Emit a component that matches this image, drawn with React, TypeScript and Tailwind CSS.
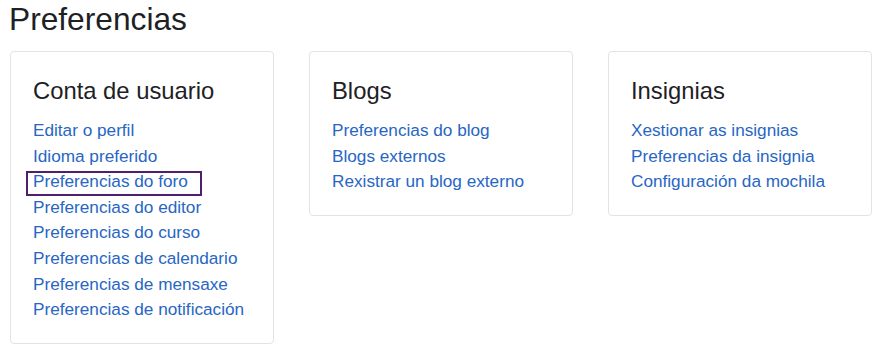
import React from 'react';

interface Section {
  title: string;
  links: string[];
}

const sections: Section[] = [
  {
    title: 'Conta de usuario',
    links: [
      'Editar o perfil',
      'Idioma preferido',
      'Preferencias do foro',
      'Preferencias do editor',
      'Preferencias do curso',
      'Preferencias de calendario',
      'Preferencias de mensaxe',
      'Preferencias de notificación',
    ],
  },
  {
    title: 'Blogs',
    links: ['Preferencias do blog', 'Blogs externos', 'Rexistrar un blog externo'],
  },
  {
    title: 'Insignias',
    links: ['Xestionar as insignias', 'Preferencias da insignia', 'Configuración da mochila'],
  },
];

// the focused link gets a ring drawn over it
const FOCUSED = 'Preferencias do foro';

const PrefCard: React.FC<{ section: Section }> = ({ section }) => (
  <div className="w-[264px] rounded-[4px] border border-[#e3e3e3] bg-white px-[22px] pt-[25px] pb-[20px]">
    <h3 className="text-[23.8px] leading-[28px] text-[#1d2125] font-normal">{section.title}</h3>
    <ul className="mt-[13px]">
      {section.links.map((link) => (
        <li key={link} className="relative h-[25.6px] leading-[25.6px]">
          <a href="#" className="text-[17.2px] text-[#2766c4]">
            {link}
          </a>
          {link === FOCUSED && (
            <span className="pointer-events-none absolute -left-[5px] top-[4px] h-[21px] w-[172px] outline-2 outline-[#4e1f6e]" />
          )}
        </li>
      ))}
    </ul>
  </div>
);

export default function App() {
  return (
    <div className="min-h-[356px] bg-white px-[10px] pt-[1px]" style={{ fontFamily: '"Liberation Sans", Arial, sans-serif' }}>
      <h2 className="-ml-[1px] text-[31.7px] leading-[37px] text-[#1d2125] font-normal">Preferencias</h2>
      <div className="mt-[13px] flex items-start gap-[35px]">
        {sections.map((s) => (
          <PrefCard key={s.title} section={s} />
        ))}
      </div>
    </div>
  );
}
